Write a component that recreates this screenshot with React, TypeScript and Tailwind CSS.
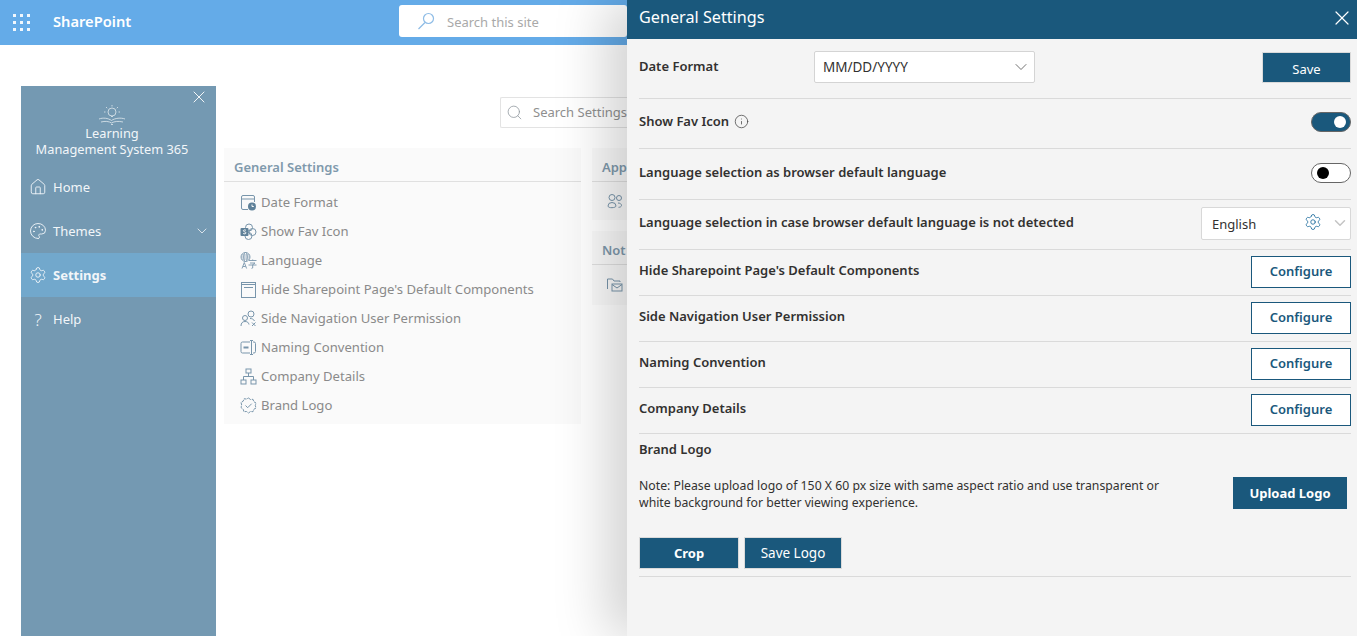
import React from "react";
import { X, ChevronDown, Settings, House, Palette, Search, Info } from "lucide-react";

const font = "font-['Noto_Sans','Open_Sans',sans-serif]";
const ic = "#7895ab";

const Svg = ({ children }: { children: React.ReactNode }) => (
  <svg width="17" height="17" viewBox="0 0 17 17" fill="none" stroke={ic} strokeWidth="1" className="shrink-0">{children}</svg>
);

const DateIcon = () => (
  <Svg>
    <path d="M8 15.500H3a1.500 1.500 0 0 1-1.500-1.500V3A1.500 1.500 0 0 1 3 1.500h10A1.500 1.500 0 0 1 14.500 3v5" />
    <path d="M1.500 5h13" />
    <circle cx="12" cy="12.500" r="4" fill="#5f8199" stroke="none" />
    <path d="M12 10.500v2h1.800" stroke="#fafafa" />
  </Svg>
);
const FavIcon = () => (
  <Svg>
    <circle cx="9" cy="4.500" r="3.500" />
    <circle cx="12.500" cy="9" r="3.500" />
    <circle cx="8.500" cy="13" r="3.500" />
    <rect x="0.500" y="5" width="8" height="8" rx="1" fill="#5f8199" stroke="none" />
    <path d="M6 7.300c-1.500-.8-3-.2-2.600.8.300.8 2.600.7 2.600 1.800 0 1-1.700 1.200-2.800.6" stroke="#fafafa" />
  </Svg>
);
const LangIcon = () => (
  <svg width="17" height="17" viewBox="0 0 17 17" fill="none" stroke={ic} strokeWidth=".9" className="shrink-0">
    <circle cx="5.500" cy="5" r="4.500" />
    <ellipse cx="5.500" cy="5" rx="1.800" ry="4.500" />
    <path d="M1 5h9M1.600 3h7.800M1.600 7h7.800" strokeWidth=".6" />
    <path d="M2 16.500l2.300-6 2.300 6M3 14.500h2.600" />
    <path d="M9 8.500h7.500M12.700 7.500v1M10 11h5l-2 1.500M8.500 13h8M12.700 12.500v3.500l-1.200.4" />
  </svg>
);
const PageIcon = () => (
  <Svg>
    <rect x="1.500" y="1.500" width="14" height="15" />
    <path d="M1.500 3.500h14M4 6.500h9" strokeWidth="1.200" />
  </Svg>
);
const UsersIcon = () => (
  <Svg>
    <circle cx="11" cy="4" r="3" />
    <circle cx="5" cy="8" r="2.500" />
    <path d="M1 16c0-3 1.500-4.500 4-4.500s3.500 1 4 3M10 8.500c2 0 3.500.6 4.500 2.500" />
    <path d="M12 12.500l3.500 3.500M15.500 12.500L12 16" />
  </Svg>
);
const NamingIcon = () => (
  <Svg>
    <path d="M10 3H2.500A1.500 1.500 0 0 0 1 4.500v8A1.500 1.500 0 0 0 2.500 14H10" />
    <path d="M13 3h1a1.500 1.500 0 0 1 1.500 1.500v8A1.500 1.500 0 0 1 14 14h-1" />
    <path d="M10 1.500h3M11.500 1.500v14M10 15.500h3" />
    <path d="M3.500 8.500h5" strokeWidth="2" />
  </Svg>
);
const OrgIcon = () => (
  <Svg>
    <rect x="6" y="1" width="5" height="4" />
    <rect x="1" y="12" width="5" height="4" />
    <rect x="11" y="12" width="5" height="4" />
    <path d="M8.500 5v3.500M3.500 12V8.500h10V12" />
  </Svg>
);
const BadgeIcon = () => (
  <Svg>
    <path d="M8.500 1l2 1.500 2.500-.2.800 2.400 2.200 1.300-.7 2.500.7 2.500-2.200 1.300-.8 2.400-2.500-.2-2 1.500-2-1.500-2.500.2-.8-2.400L1 10.500 1.700 8 1 5.500l2.200-1.300.8-2.400 2.500.2z" strokeDasharray="3 .8" />
    <path d="M5.500 8.500l2.200 2.200 4-4" />
  </Svg>
);
const GroupIcon = () => (
  <Svg>
    <circle cx="6" cy="4.500" r="3" />
    <circle cx="13" cy="5" r="2.500" />
    <path d="M2 13a4 3.500 0 0 1 8 0c0 2-8 2.500-8 0zM12 10c2 0 3.500 1 3.500 2.500 0 1-1.200 1.800-3 1.800" />
  </Svg>
);
const MailFolderIcon = () => (
  <Svg>
    <path d="M1.500 13V3h5l1.500 2h6v1" />
    <rect x="6" y="8" width="10" height="7" />
    <path d="M6 8.500l5 3.500 5-3.500" />
  </Svg>
);

const items: [React.ReactNode, string][] = [
  [<DateIcon />, "Date Format"],
  [<FavIcon />, "Show Fav Icon"],
  [<LangIcon />, "Language"],
  [<PageIcon />, "Hide Sharepoint Page's Default Components"],
  [<UsersIcon />, "Side Navigation User Permission"],
  [<NamingIcon />, "Naming Convention"],
  [<OrgIcon />, "Company Details"],
  [<BadgeIcon />, "Brand Logo"],
];

const NavItem = ({ icon, label, active, right }: { icon: React.ReactNode; label: string; active?: boolean; right?: React.ReactNode }) => (
  <div className={`h-11 flex items-center pl-[8px] pr-[6px] text-[13px] text-[#f2f6f9] ${active ? "bg-[#72a8cc] font-bold" : ""}`}>
    <span className="w-[18px] flex justify-center">{icon}</span>
    <span className="ml-[6px] flex-1 pt-[1px]">{label}</span>
    {right}
  </div>
);

const Row = ({ label }: { label: string }) => (
  <div className="h-[46px] pb-[2px] border-b border-[#dadada] flex items-center justify-between">
    <span className="text-[13px] font-semibold text-[#323130] -mt-[2px]">{label}</span>
    <button className="w-[100px] h-8 bg-white border border-[#1a587c] text-[#1a587c] text-[13px] font-semibold">Configure</button>
  </div>
);

export default function App() {
  return (
    <div className={`${font} relative w-[1357px] h-[636px] overflow-hidden bg-white`}>
      <header className="h-[45px] bg-[#64abe8] flex items-center">
        <div className="ml-[13px] grid grid-cols-3 gap-[4px] w-[17px]">
          {Array.from({ length: 9 }).map((_, i) => (
            <span key={i} className="w-[3px] h-[3px] bg-white/90" />
          ))}
        </div>
        <span className="ml-[23px] w-[80px] text-[14.700px] font-semibold text-white -mt-[2px]">SharePoint</span>
        <div className="ml-[266px] w-[228px] h-8 -mt-[3px] bg-white rounded-[3px] flex items-center pl-[18px] text-[13px] text-[#a9a9a9]">
          <svg width="18" height="18" viewBox="0 0 18 18" fill="none" stroke="#8ebce6" strokeWidth="1.200">
            <circle cx="11.500" cy="6.500" r="5" />
            <path d="M8 10.500L1.500 17" />
          </svg>
          <span className="ml-[12px] pt-[3px]">Search this site</span>
        </div>
      </header>

      <div className="flex pl-[21px] pt-[41px] h-[591px]">
        <aside className="w-[195px] h-full bg-[#7499b2] relative shrink-0">
          <button className="absolute right-[7px] top-[1px] text-white">
            <X size={20} strokeWidth={1.100} />
          </button>
          <div className="h-[79px] pt-[19px] pr-[13px] flex flex-col items-center text-[#f2f6f9] text-[12.800px] leading-[16px]">
            <svg width="28" height="20" viewBox="0 0 28 20" fill="none" stroke="#dfe8ee" strokeWidth=".8">
              <circle cx="14" cy="7" r="4" />
              <path d="M14 0v1.500M8 2l1.200 1.200M20 2l-1.200 1.200M6 7h1.500M20.500 7H22M13 11.500h2" />
              <path d="M1 14c4-1.500 9-1 12.500 1.500C17 13 23 12.500 27 14M3 17c4-1 8-.8 10.500 1 3-1.800 7-2 11.500-1M13 19.500h2" />
            </svg>
            <span>Learning</span>
            <span>Management System 365</span>
          </div>
          <nav>
            <NavItem icon={<House size={18} strokeWidth={1.200} />} label="Home" />
            <NavItem icon={<Palette size={18} strokeWidth={1.200} />} label="Themes" right={<ChevronDown size={16} strokeWidth={1.200} />} />
            <NavItem icon={<Settings size={18} strokeWidth={1.200} />} label="Settings" active />
            <NavItem icon={<span className="text-[17px] leading-none font-light">?</span>} label="Help" />
          </nav>
        </aside>

        <main className="flex-1 pl-[8px] flex flex-col">
          <div className="pl-[276px] pt-[11px]">
            <div className="w-[127px] h-[31px] overflow-hidden whitespace-nowrap border border-r-0 border-[#e3e3e3] rounded-l-[2px] flex items-center pl-[5px] text-[13px] text-[#8f8f8f]">
              <Search size={17} strokeWidth={1.100} color="#8f979d" className="shrink-0" />
              <span className="ml-[10px]">Search Settings</span>
            </div>
          </div>
          <div className="flex gap-[11px] mt-[20px]">
            <section className="w-[357px] h-[276px] bg-[#fafafa] shrink-0">
              <div className="h-[34px] pt-[6px] border-b border-[#e0e0e0] pl-[10px] flex items-center text-[13px] font-semibold text-[#7f99ac]">General Settings</div>
              <ul className="mt-[6px]">
                {items.map(([icon, label]) => (
                  <li key={label} className="h-[29px] flex items-center pl-[16px] text-[13.100px] text-[#8a8a8a]">
                    {icon}
                    <span className="ml-[4px]">{label}</span>
                  </li>
                ))}
              </ul>
            </section>
            <div className="flex flex-col gap-[11px] w-[35px] overflow-hidden whitespace-nowrap">
              <section className="h-[72px] bg-[#fafafa]">
                <div className="h-[34px] pt-[6px] border-b border-[#e0e0e0] pl-[10px] flex items-center text-[13px] font-semibold text-[#7f99ac]">App</div>
                <div className="h-[38px] pl-[14px] flex items-center"><GroupIcon /></div>
              </section>
              <section className="h-[74px] bg-[#fafafa]">
                <div className="h-[34px] pt-[6px] border-b border-[#e0e0e0] pl-[10px] flex items-center text-[13px] font-semibold text-[#7f99ac]">Not</div>
                <div className="h-[38px] pl-[14px] flex items-center"><MailFolderIcon /></div>
              </section>
            </div>
          </div>
        </main>
      </div>

      <aside className="absolute right-0 top-0 bottom-0 w-[730px] bg-[#f4f4f4] shadow-[-20px_0_50px_rgba(0,0,0,0.18)]">
        <div className="h-[39px] pb-[5px] bg-[#1a587c] flex items-center justify-between pl-3 pr-[3px] text-white">
          <span className="text-[16.200px]">General Settings</span>
          <X size={24} strokeWidth={1.200} className="mt-[1px]" />
        </div>
        <div className="pl-3 pr-[6px]">
          <div className="h-[60px] border-b border-[#dadada] flex items-start">
            <span className="w-[175px] pt-[18px] text-[13px] font-semibold text-[#323130]">Date Format</span>
            <div className="mt-3 w-[221px] h-8 bg-white border border-[#d4d4d4] rounded-[2px] flex items-center justify-between pl-2 pr-[3px] text-[13.500px] text-[#323130]">
              <span className="pt-[1px]">MM/DD/YYYY</span>
              <ChevronDown size={20} strokeWidth={1} color="#555" />
            </div>
            <button className="ml-auto mt-[13px] w-[89px] h-[31px] pt-[5px] bg-[#1a587c] border border-[#dadada] text-white text-[13px]">Save</button>
          </div>
          <div className="h-[50px] pb-[3px] border-b border-[#dadada] flex items-center justify-between">
            <span className="flex items-center gap-[5px] text-[13px] font-semibold text-[#323130]">
              Show Fav Icon <Info size={15} strokeWidth={1.200} color="#444" className="-mt-[2px]" />
            </span>
            <span className="w-10 h-5 rounded-full bg-[#1a587c] border border-[#666] flex items-center justify-end pr-[4px]">
              <span className="w-3 h-3 rounded-full bg-white" />
            </span>
          </div>
          <div className="h-[51px] pb-[2px] border-b border-[#dadada] flex items-center justify-between">
            <span className="text-[13px] font-semibold text-[#323130]">Language selection as browser default language</span>
            <span className="w-10 h-5 rounded-full bg-white border border-[#666] flex items-center pl-[5px]">
              <span className="w-3 h-3 rounded-full bg-black" />
            </span>
          </div>
          <div className="h-[50px] pb-[3px] border-b border-[#dadada] flex items-center justify-between">
            <span className="text-[13px] font-semibold text-[#323130]">Language selection in case browser default language is not detected</span>
            <div className="w-[150px] h-[33px] bg-white border border-[#d8d8d8] rounded-[2px] flex items-center pl-[10px] pr-[1px] text-[13px] text-[#323130]">
              <span className="flex-1 pt-[3px]">English</span>
              <Settings size={18} strokeWidth={1.100} color="#1a6a9c" className="-mt-[2px]" />
              <ChevronDown size={18} strokeWidth={2} color="#c4c4c4" className="ml-[9px]" />
            </div>
          </div>
          <Row label="Hide Sharepoint Page's Default Components" />
          <Row label="Side Navigation User Permission" />
          <Row label="Naming Convention" />
          <Row label="Company Details" />
          <div className="h-[143px] border-b border-[#dadada]">
            <div className="pt-[6px] text-[13px] font-semibold text-[#323130]">Brand Logo</div>
            <div className="mt-[17px] flex items-center justify-between pr-[4px]">
              <p className="w-[540px] text-[12.250px] leading-[17px] text-[#323130]">Note: Please upload logo of 150 X 60 px size with same aspect ratio and use transparent or white background for better viewing experience.</p>
              <button className="w-[114px] h-8 -mt-[2px] pt-[2px] bg-[#1a587c] text-white text-[13px] font-bold">Upload Logo</button>
            </div>
            <div className="mt-[26px] flex gap-[5px]">
              <button className="w-[100px] h-8 pt-[2px] bg-[#1a587c] border border-[#dadada] text-white text-[13px] font-bold">Crop</button>
              <button className="w-[98px] h-8 pt-[1px] bg-[#1a587c] border border-[#dadada] text-white text-[13.500px]">Save Logo</button>
            </div>
          </div>
        </div>
      </aside>
    </div>
  );
}
